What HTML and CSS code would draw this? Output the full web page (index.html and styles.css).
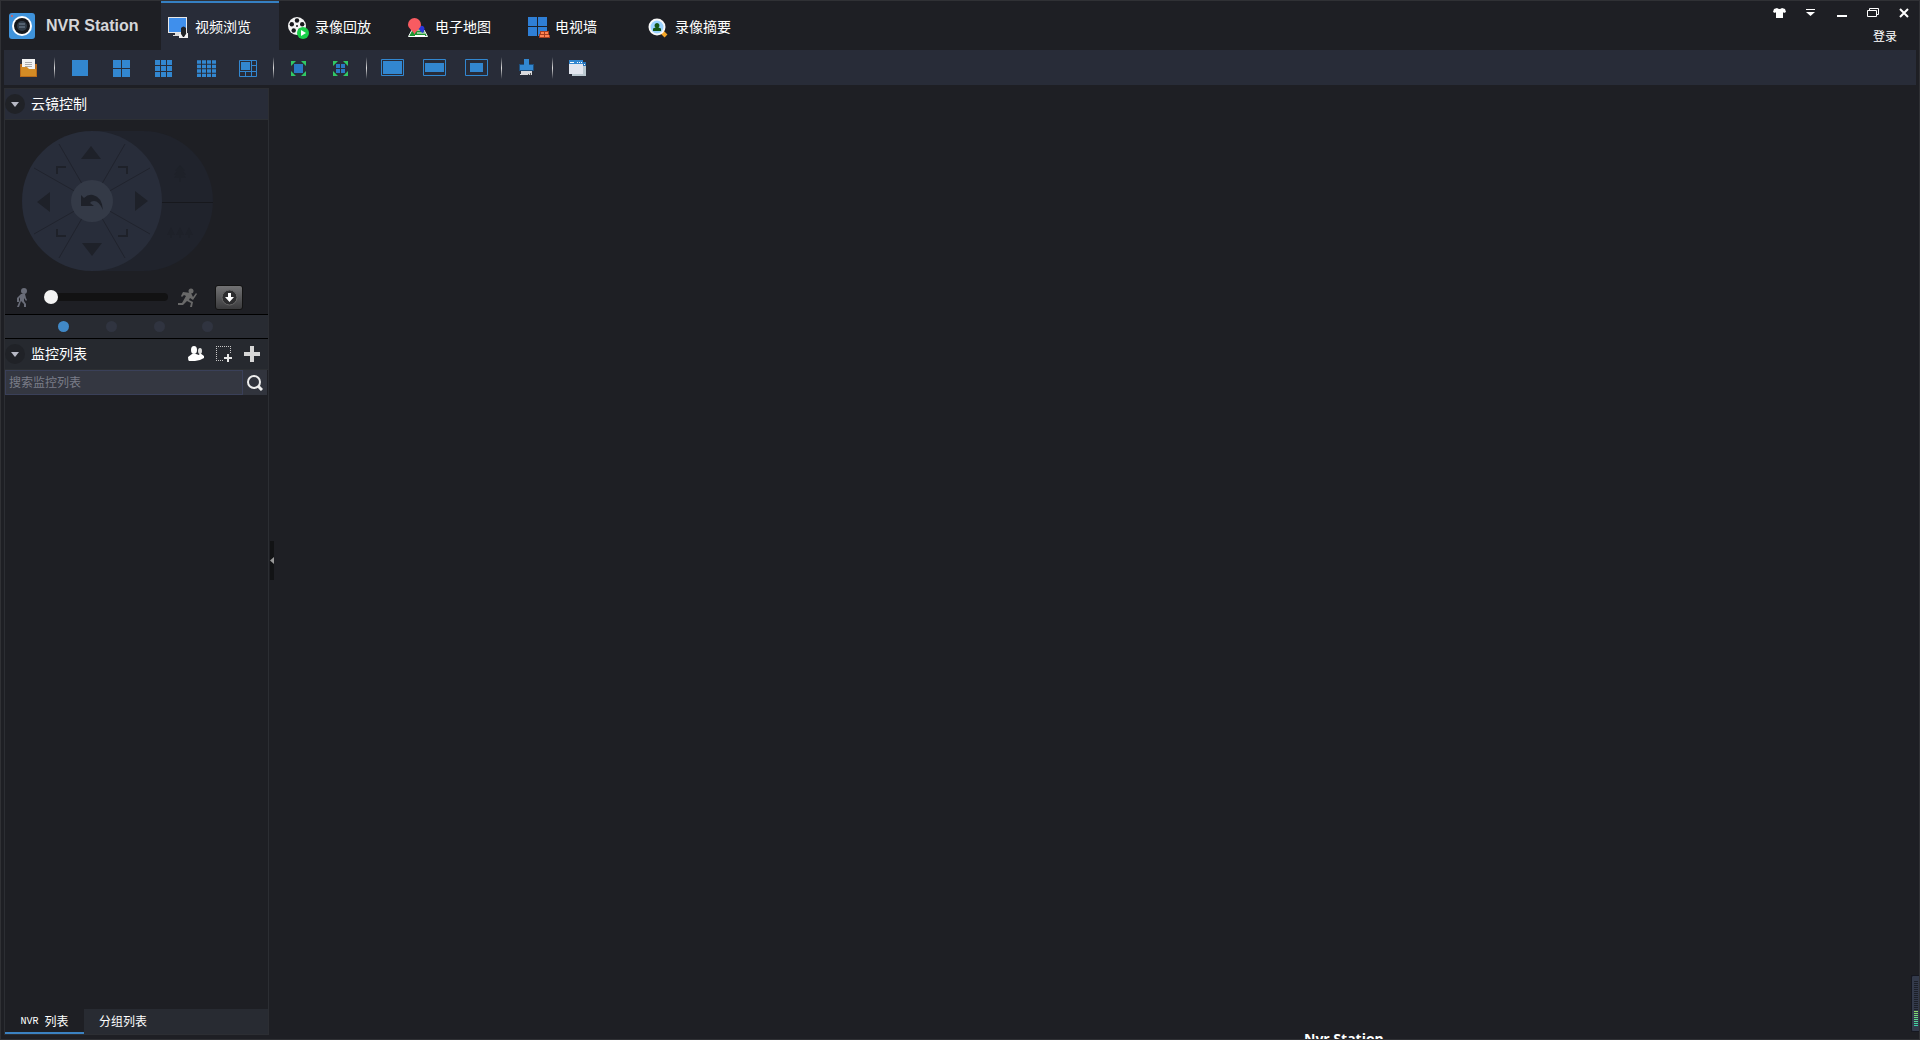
FILE: index.html
```html
<!DOCTYPE html>
<html lang="zh-CN">
<head>
<meta charset="utf-8">
<title>NVR Station</title>
<link rel="stylesheet" href="styles.css">
</head>
<body>
<div class="window">
  <header class="titlebar">
    <div class="brand">
      <svg width="26" height="26" viewBox="0 0 26 26"><rect width="26" height="26" rx="3" fill="#3f93db"/><circle cx="13" cy="13" r="10" fill="#fff"/><circle cx="13" cy="13" r="8" fill="#15171b"/><circle cx="13" cy="13" r="5" fill="#303b46"/><path d="M10 11h6M10 14h6" stroke="#78899a"/><circle cx="3" cy="3" r="1" fill="#e8584c"/></svg>
      <h1 class="brand-name">NVR Station</h1>
    </div>
    <nav class="tabs">
      <button class="tab tab-active"><svg width="22" height="22" viewBox="0 0 22 22"><path d="M0 0h19v16H0z" fill="#e8e8e8"/><path d="M1 1h17v14H1z" fill="#3f8fec"/><path d="M7 16h6v3H5v-1h2z" fill="#ddd"/><path d="M11 17l9-1v5h-9z" fill="#f2f2f2"/><path d="M13 11q2.500-3 5 0v6l-2 3h-1l-2-3z" fill="#202226"/></svg><span>视频浏览</span></button>
      <button class="tab"><svg width="22" height="22" viewBox="0 0 22 22"><circle cx="9" cy="9" r="9" fill="#f4f4f4"/><g fill="#17181b"><circle cx="9" cy="3.500" r="2.200"/><circle cx="14.200" cy="7.300" r="2.200"/><circle cx="3.800" cy="7.300" r="2.200"/><circle cx="5.700" cy="13.500" r="2.200"/><circle cx="12.300" cy="13.500" r="2.200"/><circle cx="9" cy="9" r="1"/></g><circle cx="15" cy="16" r="6" fill="#19cf49"/><path d="M13 13l5 3-5 3z" fill="#fff"/></svg><span>录像回放</span></button>
      <button class="tab"><svg width="22" height="22" viewBox="0 0 22 22"><path d="M4 13h12l3.500 6.500H.5z" fill="#1c9431" stroke="#fff"/><path d="M9 16h8M7 18.500h10" stroke="#fff"/><path d="M11 11q1-3 4-2 3 2 0 7-4-2-4-5z" fill="#2936dd"/><path d="M0 7.500a6.500 6.500 0 0 1 13 0c0 4-5 6-6.500 10C5 13.500 0 11.500 0 7.500z" fill="#f85b61"/></svg><span>电子地图</span></button>
      <button class="tab"><svg width="22" height="22" viewBox="0 0 22 22"><path d="M0 0h9v9H0zM10 0h9v9h-9zM0 10h9v9H0zM10 10h9v9h-9z" fill="#2f7fd6"/><path d="M12 14h9v4h1v3H11v-4h1z" fill="#a83e1e"/><path d="M13 15h3v2h-3zM17 15h3v2h-3zM12 18h4v2h-4zM17 18h4v2h-4z" fill="#ff8352"/></svg><span>电视墙</span></button>
      <button class="tab"><svg width="22" height="22" viewBox="0 0 22 22"><path d="M14 15l4 4" stroke="#f6a728" stroke-width="4"/><circle cx="9" cy="10" r="8.500" fill="#f8f8f8"/><circle cx="9" cy="10" r="6.500" fill="#99d2ff"/><path d="M9 6a2.500 2.500 0 0 1 1.500 4.500l2.500 1V14H5v-2.500l2.500-1A2.500 2.500 0 0 1 9 6z" fill="#155516"/></svg><span>录像摘要</span></button>
    </nav>
    <div class="account">
      <div class="window-controls">
        <button class="control" aria-label="换肤"><svg width="13" height="10" viewBox="0 0 13 10"><path d="M4 0q2.500 2 5 0l3 1 1 3-2 1-1-1v6H3V4L2 5 0 4l1-3z" fill="#fff"/></svg></button>
        <button class="control" aria-label="菜单"><svg width="11" height="8" viewBox="0 0 11 8"><path d="M1 0h9v1H1zM1 3h9L5.500 7z" fill="#fff"/></svg></button>
        <button class="control" aria-label="最小化"><svg width="10" height="10" viewBox="0 0 10 10"><path d="M0 7h10v2H0z" fill="#fff"/></svg></button>
        <button class="control" aria-label="还原"><svg width="12" height="10" viewBox="0 0 12 10"><path d="M.5 2.500h9v6h-9zM2.500 2V.5h9v6H10" fill="none" stroke="#fff"/></svg></button>
        <button class="control" aria-label="关闭"><svg width="10" height="10" viewBox="0 0 10 10"><path d="M1 1l8 8M9 1L1 9" stroke="#fff" stroke-width="2"/></svg></button>
      </div>
      <a class="login" href="#login">登录</a>
    </div>
  </header>

  <div class="toolbar">
    <button class="tool" aria-label="打开"><svg width="18" height="18" viewBox="0 0 18 18"><path d="M0 5h17v13H0z" fill="#b96b1b"/><path d="M2 0h13v12H2z" fill="#f3f3f3"/><path d="M5 3.500h7M5 5.500h7M5 7.500h7" stroke="#aaa"/><path d="M1 8h6l2 2h7v7H1z" fill="#d38b25"/></svg></button>
    <span class="divider"></span>
    <button class="tool" aria-label="单画面"><svg width="16" height="16" viewBox="0 0 16 16"><path d="M0 0h16v16H0z" fill="#3287d0"/></svg></button>
    <button class="tool" aria-label="四画面"><svg width="18" height="18" viewBox="0 0 18 18"><path d="M0 1h8v8H0zM9 1h8v8H9zM0 10h8v8H0zM9 10h8v8H9z" fill="#3287d0"/></svg></button>
    <button class="tool" aria-label="九画面"><svg width="18" height="18" viewBox="0 0 18 18"><path d="M0 1h5v5H0zM6 1h5v5H6zM12 1h5v5h-5zM0 7h5v5H0zM6 7h5v5H6zM12 7h5v5h-5zM0 13h5v5H0zM6 13h5v5H6zM12 13h5v5h-5z" fill="#3287d0"/></svg></button>
    <button class="tool" aria-label="十六画面"><svg width="19" height="18" viewBox="0 0 19 18"><path d="M0 3h19M0 7.500h19M0 12h19M0 16.500h19" stroke="#3287d0" stroke-width="3.500" stroke-dasharray="4 1"/></svg></button>
    <button class="tool" aria-label="自定义画面"><svg width="18" height="18" viewBox="0 0 18 18"><path d="M.5 1.500h17v16H.5zM12.500 1v17M0 12.500h18M12 6.500h6M6.500 13v5" fill="none" stroke="#3287d0"/><path d="M2 3h9v8H2z" fill="#3287d0"/></svg></button>
    <span class="divider"></span>
    <button class="tool" aria-label="全屏"><svg width="16" height="16" viewBox="0 0 16 16"><path d="M0 1h5L0 6zM10 1h5v5zM0 16v-5l5 5zM15 16h-5l5-5z" fill="#30c964"/><path d="M3 4h9v9H3z" fill="#2a78c4"/></svg></button>
    <button class="tool" aria-label="多画面全屏"><svg width="16" height="16" viewBox="0 0 16 16"><path d="M0 1h5L0 6zM10 1h5v5zM0 16v-5l5 5zM15 16h-5l5-5z" fill="#30c964"/><path d="M3 4h4v4H3zM8 4h4v4H8zM3 9h4v4H3zM8 9h4v4H8z" fill="#2a78c4"/></svg></button>
    <span class="divider"></span>
    <button class="tool" aria-label="填充"><svg width="23" height="17" viewBox="0 0 23 17"><path d="M.5.5h22v16H.5z" fill="none" stroke="#3287d0"/><path d="M2 2h19v13H2z" fill="#3287d0"/></svg></button>
    <button class="tool" aria-label="宽屏比例"><svg width="23" height="17" viewBox="0 0 23 17"><path d="M.5.5h22v16H.5z" fill="none" stroke="#3287d0"/><path d="M2 4h19v9H2z" fill="#3287d0"/></svg></button>
    <button class="tool" aria-label="原始比例"><svg width="23" height="17" viewBox="0 0 23 17"><path d="M.5.5h22v16H.5z" fill="none" stroke="#3287d0"/><path d="M5 4h13v9H5z" fill="#3287d0"/></svg></button>
    <span class="divider"></span>
    <button class="tool" aria-label="清理"><svg width="16" height="17" viewBox="0 0 16 17"><path d="M0 5h15v7H0z" fill="#1d4f7d"/><path d="M5 0h5v6h4v5H1V6h4z" fill="#3287d0"/><path d="M2 12h11v4H1v-1h1z" fill="#d9d9dc"/><path d="M9 16v-1h1v1M11 16v-2h1v2" fill="#555"/></svg></button>
    <span class="divider"></span>
    <button class="tool" aria-label="窗口"><svg width="18" height="16" viewBox="0 0 18 16"><path d="M3 2h14v14H3z" fill="#bac8d0"/><path d="M13 2h4v4h-4z" fill="#2873b8"/><path d="M15 4h1v1h-1z" fill="#fff"/><path d="M0 0h14v14H0z" fill="#e2e6ef"/><path d="M0 0h14v4H0z" fill="#3287d0"/><path d="M1 2h4v1H1zM8 2h1v1H8zM10 2h1v1h-1zM12 2h1v1h-1z" fill="#fff"/></svg></button>
  </div>

  <main class="workspace">
    <aside class="sidebar">
      <section>
        <header class="panel-head">
          <button class="fold" aria-label="折叠云镜控制"></button>
          <h2 class="panel-title">云镜控制</h2>
        </header>
        <div class="ptz">
          <svg class="wheel" width="192" height="140" viewBox="0 0 192 140" role="img" aria-label="云台方向盘">
            <path d="M70 0h51a70 70 0 0 1 0 140H70z" fill="#20232c"/>
            <path d="M140 71.500h51" stroke="#17181d"/>
            <g fill="#1e2129"><path d="M158 34l5 6h-2l3 4h-2l2 3h-5v4h-2v-4h-5l2-3h-2l3-4h-2z"/><path d="M149 96l4 8h-3v3h-2v-3h-3zM158 96l4 8h-3v3h-2v-3h-3zM167 96l4 8h-3v3h-2v-3h-3z"/></g>
            <circle cx="70" cy="70" r="70" fill="#282d3a"/>
            <path d="M37 13l66 114M103 13L37 127M12 37l116 66M128 37L12 103" stroke="#20232d"/>
            <circle cx="70" cy="70" r="21" fill="#343a47"/>
            <path d="M69 15l10 13H59zM70 125L60 112h20zM15 71l13-10v20zM126 70l-13-10v20z" fill="#1e2129"/>
            <path d="M35 43v-7h9M96 36h9v7M35 98v7h9M96 105h9v-7" fill="none" stroke="#1e2129" stroke-width="2"/>
            <path d="M59 64l3 3q4-4 9-3 9 2 10 15-4-9-9-9-3 0-4 2l4 3H59z" fill="#1e2129"/>
          </svg>
          <div class="speed">
            <svg width="11" height="19" viewBox="0 0 11 19"><circle cx="7" cy="3" r="3" fill="#696c78"/><path d="M4 6h4l1 4 1 2-1 1-2-3v3l2 3v3H7v-3l-3-3-2 6H0l3-7V9l-1 2v3H0v-4z" fill="#696c78"/></svg>
            <input class="speed-range" type="range" min="0" max="7" value="0" aria-label="云台速度">
            <svg width="19" height="19" viewBox="0 0 19 19"><circle cx="13" cy="3" r="2.500" fill="#696969"/><path d="M5 4l8 1 2 4 3-4 1 1-4 6-3-2-1 2 4 2-1 5h-2l1-4-4-2-4 4H0v-2h4l4-7-2-1-2 2-1-1z" fill="#696969"/></svg>
            <button class="more" aria-label="展开高级"><svg width="17" height="17" viewBox="0 0 17 17"><circle cx="8.500" cy="8.500" r="7.500" fill="#2c2c2e" stroke="#666"/><path d="M7 4h3v4h3l-4.500 5L4 8h3z" fill="#fff"/></svg></button>
          </div>
        </div>
        <div class="pager">
          <button class="dot dot-on" aria-label="第1页"></button>
          <button class="dot" aria-label="第2页"></button>
          <button class="dot" aria-label="第3页"></button>
          <button class="dot" aria-label="第4页"></button>
        </div>
      </section>
      <section class="monitor">
        <header class="panel-head panel-head-list">
          <button class="fold" aria-label="折叠监控列表"></button>
          <h2 class="panel-title">监控列表</h2>
          <button class="list-tool" aria-label="用户"><svg width="16" height="16" viewBox="0 0 16 16"><ellipse cx="6" cy="4" rx="3" ry="4" fill="#fff"/><ellipse cx="12" cy="5" rx="2" ry="3" fill="#ddd"/><path d="M0 11l4-3h4l3 1 1-2 4 3v2l-4 2-5 1H1q-1-1-1-4z" fill="#fff"/></svg></button>
          <button class="list-tool" aria-label="新建分组"><svg width="16" height="16" viewBox="0 0 16 16"><path d="M0 .5h15M.5 2v13M14.500 2v6M2 14.500h6" stroke="#c8c8c8" stroke-dasharray="1 1"/><path d="M8 12h8M12 8v8" stroke="#e8e8e8" stroke-width="2"/></svg></button>
          <button class="list-tool" aria-label="添加"><svg width="16" height="16" viewBox="0 0 16 16"><path d="M6 0h4v6h6v4h-6v6H6v-6H0V6h6z" fill="#d6d6d6"/></svg></button>
        </header>
        <form class="search">
          <input class="search-field" type="text" placeholder="搜索监控列表" aria-label="搜索监控列表">
          <button class="search-go" type="button" aria-label="搜索"><svg width="16" height="16" viewBox="0 0 16 16"><circle cx="7" cy="7" r="6" fill="none" stroke="#eee" stroke-width="2"/><path d="M11 11l4 4" stroke="#eee" stroke-width="3"/></svg></button>
        </form>
      </section>
      <nav class="list-tabs">
        <button class="list-tab list-tab-on"><span class="latin">NVR </span>列表</button>
        <button class="list-tab">分组列表</button>
      </nav>
    </aside>
    <button class="collapse" aria-label="收起侧栏"><svg width="4" height="7" viewBox="0 0 4 7"><path d="M4 0v7L0 3.500z" fill="#999"/></svg></button>
  </main>

  <div class="meter" role="img" aria-label="音量"><span class="meter-scale"></span><span class="meter-level"></span></div>
  <div class="toast">Nvr Station</div>
</div>
</body>
</html>
```
FILE: styles.css
```css
* {
  box-sizing: border-box;
}

body {
  margin: 0;
  background: #1e1f24;
  color: #fff;
  font-family: "Liberation Sans", "Noto Sans CJK SC", sans-serif;
  font-size: 14px;
}

button {
  display: flex;
  align-items: center;
  justify-content: center;
  margin: 0;
  padding: 0;
  border: 0;
  background: none;
  color: inherit;
  font: inherit;
}

svg {
  display: block;
  flex: none;
}

.window {
  position: relative;
  display: flex;
  flex-direction: column;
  height: 100vh;
  overflow: hidden;
  border: 1px solid #303135;
}

.titlebar {
  display: flex;
  height: 49px;
}

.brand {
  display: flex;
  align-items: center;
  gap: 11px;
  width: 160px;
  padding-left: 8px;
}

.brand-name {
  margin: 0;
  color: #d5d6d9;
  font-size: 16px;
  line-height: 20px;
}

.tabs {
  display: flex;
  gap: 2px;
}

.tab {
  justify-content: flex-start;
  gap: 5px;
  width: 118px;
  padding: 2px 7px 0;
  border-top: 2px solid transparent;
  line-height: 22px;
}

.tab span {
  padding-bottom: 2px;
}

.tab-active {
  border-top-color: #3580c3;
  background: #282c38;
}

.account {
  display: flex;
  flex-direction: column;
  align-items: flex-end;
  margin-left: auto;
}

.window-controls {
  display: flex;
}

.control {
  width: 31px;
  height: 24px;
}

.login {
  margin-right: 22px;
  color: #fff;
  font-size: 12px;
  line-height: 24px;
  text-decoration: none;
}

.toolbar {
  display: flex;
  align-items: center;
  height: 35px;
  margin: 0 3px;
  padding-left: 4px;
  background: #282c38;
}

.tool {
  width: 42px;
  height: 35px;
}

.divider {
  width: 9px;
  height: 22px;
  background: linear-gradient(#0000, #ddd, #0000) center / 1px 100% no-repeat;
}

.workspace {
  display: flex;
  flex: 1;
  min-height: 0;
  padding: 3px 3px 4px;
}

.sidebar {
  display: flex;
  flex-direction: column;
  width: 265px;
  border: 1px solid #2c2e33;
}

.panel-head {
  display: flex;
  align-items: center;
  height: 31px;
  border-bottom: 1px solid #2c2f33;
  background: #282c38;
}

.panel-head-list {
  padding-right: 2px;
  background: #26292f;
}

.fold {
  width: 20px;
  height: 20px;
  border-radius: 50%;
  background: #202227;
}

.fold::before {
  content: "";
  border: 4px solid transparent;
  border-top: 5px solid #b8bac6;
  border-bottom: 0;
}

.panel-title {
  flex: 1;
  margin: 0;
  padding-left: 6px;
  font-size: 14px;
  font-weight: 400;
  line-height: 20px;
}

.ptz {
  height: 194px;
  padding: 11px 0 0 12px;
}

.wheel {
  margin-left: 5px;
}

.speed {
  display: flex;
  align-items: center;
  height: 26px;
  margin-top: 13px;
}

.speed-range {
  appearance: none;
  width: 124px;
  height: 8px;
  margin: 0 10px 0 16px;
  border-radius: 4px;
  background: #121213;
}

.speed-range::-webkit-slider-thumb {
  appearance: none;
  width: 14px;
  height: 14px;
  border-radius: 50%;
  background: #f4f4f4;
}

.more {
  width: 28px;
  height: 25px;
  margin-left: 18px;
  border: 1px solid #131313;
  border-radius: 3px;
  background: linear-gradient(#727274, #3a3a3c);
}

.pager {
  display: flex;
  align-items: center;
  gap: 37px;
  height: 25px;
  padding-left: 53px;
  border-top: 1px solid #000;
  border-bottom: 1px solid #000;
  background: #282b32;
}

.dot {
  width: 11px;
  height: 11px;
  border-radius: 50%;
  background: #303440;
}

.dot-on {
  background: #4189c7;
}

.monitor {
  flex: 1;
}

.list-tool {
  width: 28px;
  height: 28px;
}

.search {
  display: flex;
  height: 25px;
  padding-right: 1px;
}

.search-field {
  flex: 1;
  min-width: 0;
  padding: 0 3px;
  border: 1px solid #3a4059;
  background: #343741;
  color: #fff;
  font: inherit;
  font-size: 12px;
}

.search-field::placeholder {
  color: #7a7d88;
}

.search-go {
  width: 24px;
  background: #31343d;
}

.list-tabs {
  display: flex;
  height: 25px;
  background: #282b32;
}

.list-tab {
  padding: 2px 15px 0;
  border-bottom: 2px solid transparent;
  font-size: 12px;
  line-height: 20px;
  white-space: nowrap;
}

.list-tab-on {
  width: 79px;
  border-bottom-color: #3b82c2;
  background: #1e1f24;
}

.latin {
  font-family: "Liberation Mono", monospace;
  font-size: 10px;
  white-space: pre;
}

.collapse {
  align-self: center;
  width: 4px;
  height: 39px;
  margin: 0 0 3px 1px;
  background: #121315;
}

.meter {
  position: absolute;
  right: -1px;
  bottom: 7px;
  display: flex;
  flex-direction: column;
  align-items: center;
  width: 9px;
  height: 57px;
  padding-top: 5px;
  border: 1px solid #151720;
  border-right: 0;
  border-radius: 2px 0 0 2px;
  background: #333a4b;
}

.meter-scale,
.meter-level {
  width: 4px;
  height: 29px;
  background: repeating-linear-gradient(#1c1f28 0 1px, #333a4b 1px 2px);
}

.meter-level {
  height: 16px;
  margin-top: 1px;
  background: repeating-linear-gradient(#0000 0 1px, #333a4b 1px 2px), linear-gradient(#8edb68, #32d2ad);
}

.toast {
  position: absolute;
  right: 22px;
  bottom: -11px;
  width: 600px;
  padding-left: 7px;
  background: #1e1f24;
  font-family: "Open Sans", sans-serif;
  font-size: 14px;
  font-weight: 700;
  line-height: 22px;
}
```
